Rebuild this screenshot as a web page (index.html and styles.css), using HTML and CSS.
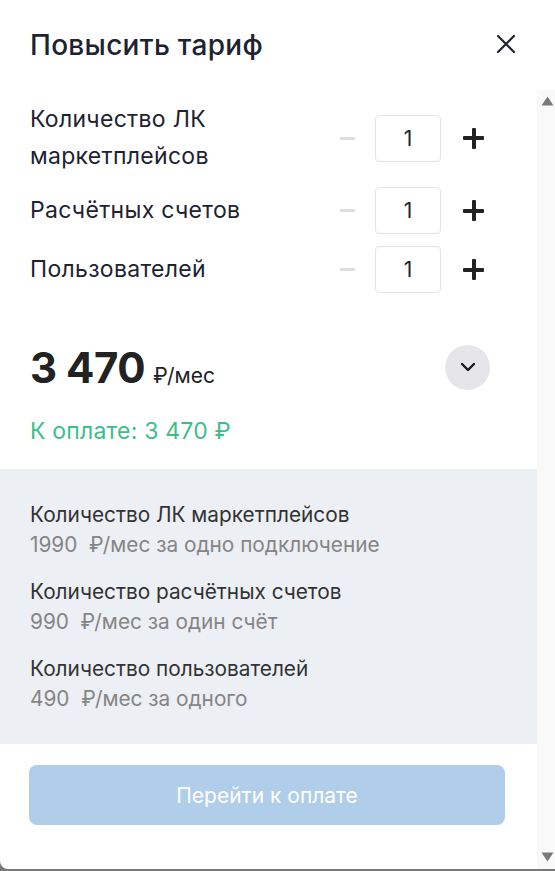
FILE: index.html
```html
<!DOCTYPE html>
<html lang="ru">
<head>
<meta charset="utf-8">
<link rel="stylesheet" href="styles.css">
</head>
<body>
<div class="modal">
  <header class="modal-header">
    <h1 class="modal-title">Повысить тариф</h1>
    <button class="close-btn" aria-label="Закрыть">
      <svg width="18" height="18" viewBox="0 0 18 18"><path d="M1 1L17 17M17 1L1 17" stroke="#1d2331" stroke-width="2.2" stroke-linecap="round"/></svg>
    </button>
  </header>
  <div class="modal-body">
    <div class="scroll-content">
      <div class="counters">
        <div class="counter-row">
          <div class="counter-label">Количество ЛК<br>маркетплейсов</div>
          <div class="counter-controls">
            <span class="minus"></span>
            <div class="qty">1</div>
            <span class="plus"></span>
          </div>
        </div>
        <div class="counter-row">
          <div class="counter-label">Расчётных счетов</div>
          <div class="counter-controls">
            <span class="minus"></span>
            <div class="qty">1</div>
            <span class="plus"></span>
          </div>
        </div>
        <div class="counter-row">
          <div class="counter-label">Пользователей</div>
          <div class="counter-controls">
            <span class="minus"></span>
            <div class="qty">1</div>
            <span class="plus"></span>
          </div>
        </div>
      </div>

      <div class="price-row">
        <div class="price"><span class="price-value">3 470</span><span class="price-unit">₽/мес</span></div>
        <button class="toggle-btn" aria-label="Подробнее">
          <svg width="16" height="10" viewBox="0 0 16 10"><path d="M2 2L8 8L14 2" fill="none" stroke="#1a1a1a" stroke-width="2.4" stroke-linecap="round" stroke-linejoin="round"/></svg>
        </button>
      </div>
      <div class="to-pay">К оплате: 3 470 ₽</div>

      <div class="details">
        <div class="detail">
          <div class="detail-title">Количество ЛК маркетплейсов</div>
          <div class="detail-sub">1990&nbsp; ₽/мес за одно подключение</div>
        </div>
        <div class="detail">
          <div class="detail-title">Количество расчётных счетов</div>
          <div class="detail-sub">990&nbsp; ₽/мес за один счёт</div>
        </div>
        <div class="detail">
          <div class="detail-title">Количество пользователей</div>
          <div class="detail-sub">490&nbsp; ₽/мес за одного</div>
        </div>
      </div>

      <div class="actions">
        <button class="pay-btn">Перейти к оплате</button>
      </div>
    </div>
    <div class="scrollbar" aria-hidden="true">
      <svg class="sb-arrow" width="13" height="10" viewBox="0 0 13 10"><path d="M6.5 0.5L12.5 9.5H0.5Z" fill="#7b7b7b"/></svg>
      <svg class="sb-arrow" width="13" height="10" viewBox="0 0 13 10"><path d="M0.5 0.5H12.5L6.5 9.5Z" fill="#7b7b7b"/></svg>
    </div>
  </div>
</div>
</body>
</html>
```

FILE: styles.css
```css
* { box-sizing: border-box; }
html, body {
  margin: 0;
  padding: 0;
  height: 100%;
}
body {
  background: #787878;
  font-family: Inter, "Noto Sans", sans-serif;
  color: #1d2331;
}
.modal {
  width: 555px;
  height: 869px;
  background: #fff;
  border-bottom-left-radius: 8px;
  display: flex;
  flex-direction: column;
  overflow: hidden;
}
.modal-header {
  height: 90px;
  flex: none;
  display: flex;
  align-items: flex-start;
  justify-content: space-between;
  padding: 28px 40px 0 30px;
}
.modal-title {
  margin: 0;
  font-size: 28px;
  line-height: 34px;
  font-weight: 500;
  letter-spacing: 0.3px;
  color: #1d2331;
}
.close-btn {
  border: 0;
  background: none;
  padding: 0;
  margin-top: 7px;
  width: 18px;
  height: 18px;
  display: flex;
}
.modal-body {
  flex: 1;
  display: flex;
  min-height: 0;
}
.scroll-content {
  flex: 1;
  display: flex;
  flex-direction: column;
}
.scrollbar {
  width: 18px;
  flex: none;
  background: #f9f9f9;
  display: flex;
  flex-direction: column;
  justify-content: space-between;
  align-items: flex-end;
  padding: 6px 1px 7px 0;
}
.sb-arrow { display: block; }

.counters {
  display: flex;
  flex-direction: column;
  gap: 12px;
  padding: 11px 0 0 30px;
  width: 484px;
}
.counter-row {
  display: flex;
  align-items: center;
  justify-content: space-between;
}
.counter-label {
  font-size: 23px;
  line-height: 37px;
  letter-spacing: 0.3px;
  color: #1d2331;
}
.counter-controls {
  display: flex;
  align-items: center;
}
.minus {
  width: 15px;
  height: 3px;
  background: #dedede;
  border-radius: 1px;
  margin-right: 20px;
}
.qty {
  width: 66px;
  height: 47px;
  border: 1px solid #dfe3ea;
  border-radius: 4px;
  display: flex;
  align-items: center;
  justify-content: center;
  font-size: 21px;
  color: #1d2331;
}
.plus {
  position: relative;
  width: 21px;
  height: 21px;
  margin-left: 22px;
  display: block;
}
.plus::before, .plus::after {
  content: "";
  position: absolute;
  background: #222;
  border-radius: 1px;
}
.plus::before { left: 0; right: 0; top: 8.5px; height: 4px; }
.plus::after { top: 0; bottom: 0; left: 8.5px; width: 4px; }

.price-row {
  margin-top: 51px;
  padding-left: 30px;
  width: 490px;
  display: flex;
  align-items: center;
  justify-content: space-between;
  height: 46px;
}
.price {
  display: flex;
  align-items: baseline;
  gap: 8px;
  color: #222;
}
.price-value {
  font-size: 42px;
  font-weight: 700;
  letter-spacing: -0.5px;
}
.price-unit {
  font-size: 21px;
}
.toggle-btn {
  width: 45px;
  height: 45px;
  border-radius: 50%;
  border: 0;
  padding: 0;
  background: #e6e6ea;
  display: flex;
  align-items: center;
  justify-content: center;
}
.to-pay {
  margin-top: 27px;
  padding-left: 30px;
  font-size: 23px;
  line-height: 28px;
  letter-spacing: 0.2px;
  color: #3dbd8a;
}
.details {
  margin-top: 24px;
  background: #ecf0f4;
  padding: 31px 30px 30px;
  display: flex;
  flex-direction: column;
  gap: 17px;
}
.detail-title, .detail-sub {
  font-size: 20.8px;
  line-height: 30px;
}
.detail-title { color: #333; }
.detail-sub { color: #858585; }
.actions {
  padding: 21px 32px 0 29px;
}
.pay-btn {
  width: 100%;
  height: 60px;
  border: 0;
  border-radius: 8px;
  background: #b0cdea;
  color: #fff;
  font-family: Inter, "Noto Sans", sans-serif;
  font-size: 21px;
}
```
